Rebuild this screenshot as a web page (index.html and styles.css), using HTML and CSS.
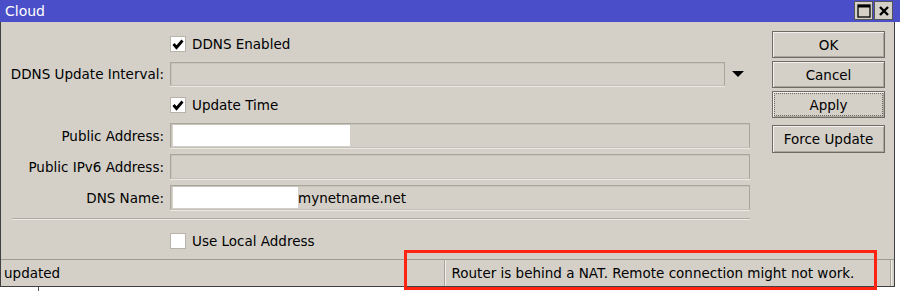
FILE: index.html
```html
<!DOCTYPE html>
<html>
<head>
<meta charset="utf-8">
<link rel="stylesheet" href="styles.css">
</head>
<body>
<div class="screen">
  <div class="titlebar">
    <span class="title">Cloud</span>
    <div class="tbtns">
      <span class="tbtn"><svg width="14" height="14" viewBox="0 0 14 14"><rect x="1" y="1" width="12" height="12" fill="none" stroke="#000" stroke-width="1.3"/><rect x="1" y="1" width="12" height="2.5" fill="#000"/></svg></span>
      <span class="tbtn"><svg width="12" height="12" viewBox="0 0 12 12"><path d="M2 2 L10 10 M10 2 L2 10" stroke="#000" stroke-width="2.4"/></svg></span>
    </div>
  </div>
  <div class="window">
    <div class="main">
      <div class="form">
        <div class="row">
          <div class="label"></div>
          <label class="check"><span class="box"><svg width="12" height="12" viewBox="0 0 12 12"><path d="M1.5 6 L4.5 9.5 L10.5 2.5" fill="none" stroke="#000" stroke-width="2.8"/></svg></span>DDNS Enabled</label>
        </div>
        <div class="row r24">
          <div class="label">DDNS Update Interval:</div>
          <div class="field drop"></div>
          <span class="arrow"></span>
        </div>
        <div class="row">
          <div class="label"></div>
          <label class="check"><span class="box"><svg width="12" height="12" viewBox="0 0 12 12"><path d="M1.5 6 L4.5 9.5 L10.5 2.5" fill="none" stroke="#000" stroke-width="2.8"/></svg></span>Update Time</label>
        </div>
        <div class="row">
          <div class="label">Public Address:</div>
          <div class="field"><span class="redact w177"></span></div>
        </div>
        <div class="row">
          <div class="label">Public IPv6 Address:</div>
          <div class="field"></div>
        </div>
        <div class="row">
          <div class="label">DNS Name:</div>
          <div class="field"><span class="redact w125"></span><span class="val">mynetname.net</span></div>
        </div>
        <div class="sep"></div>
        <div class="row">
          <div class="label"></div>
          <label class="check"><span class="box"></span>Use Local Address</label>
        </div>
      </div>
      <div class="buttons">
        <div class="btn">OK</div>
        <div class="btn">Cancel</div>
        <div class="btn focus"><span>Apply</span></div>
        <div class="btn force">Force Update</div>
      </div>
    </div>
    <div class="status">
      <div class="seg s1">updated</div>
      <div class="seg s2"></div>
      <div class="seg s3">Router is behind a NAT. Remote connection might not work.</div>
      <div class="seg s4"></div>
    </div>
  </div>
  <div class="below"><span class="vl"></span></div>
  <div class="highlight"></div>
</div>
</body>
</html>
```

FILE: styles.css
```css
html, body {
  margin: 0;
  padding: 0;
  background: #ffffff;
}
.screen {
  position: relative;
  width: 900px;
  height: 291px;
  overflow: hidden;
  font-family: "DejaVu Sans", Verdana, sans-serif;
  font-size: 13.5px;
  color: #000;
}
.titlebar {
  height: 22px;
  background: #4a4fc9;
  display: flex;
  align-items: center;
  justify-content: space-between;
  padding-left: 5px;
  padding-right: 7px;
  box-sizing: border-box;
}
.title {
  color: #fff;
  font-size: 14px;
  font-family: "DejaVu Sans", sans-serif;
}
.tbtns {
  display: flex;
  gap: 1px;
  align-self: flex-start;
  padding-top: 1px;
}
.tbtn {
  width: 19px;
  height: 19px;
  background: #d4d0c8;
  border: 1px solid #555;
  display: flex;
  align-items: center;
  justify-content: center;
  box-sizing: border-box;
}
.window {
  width: 895px;
  height: 265px;
  box-sizing: border-box;
  background: #d4d0c8;
  border-left: 1px solid #404040;
  border-right: 1px solid #404040;
  border-bottom: 1px solid #404040;
  display: flex;
  flex-direction: column;
}
.main {
  display: flex;
  flex: 1;
}
.form {
  width: 749px;
  padding-top: 9px;
  display: flex;
  flex-direction: column;
  gap: 6px;
}
.row {
  height: 25px;
  display: flex;
  align-items: center;
}
.row.r24 { height: 24px; }
.label {
  width: 163px;
  flex: none;
  text-align: right;
  padding-right: 6px;
  white-space: nowrap;
}
.field {
  flex: 1;
  align-self: stretch;
  box-sizing: border-box;
  border: 1px solid #a9a59d;
  border-bottom-color: #c4c0b8;
  box-shadow: inset 1px 1px 0 #c8c4bc, 0 1px 0 #ebe9e4;
  display: flex;
  align-items: stretch;
  padding: 1px 2px;
}
.field.drop {
  flex: none;
  width: 555px;
}
.arrow {
  width: 0;
  height: 0;
  margin-left: 7px;
  border-left: 6px solid transparent;
  border-right: 6px solid transparent;
  border-top: 6px solid #000;
}
.redact {
  background: #fff;
  display: block;
}
.w177 { width: 177px; }
.w125 { width: 125px; }
.val {
  display: flex;
  align-items: center;
}
.check {
  display: flex;
  align-items: center;
  gap: 6px;
}
.box {
  width: 16px;
  height: 16px;
  box-sizing: border-box;
  background: #fff;
  border: 1px solid #b8b4ac;
  display: flex;
  align-items: center;
  justify-content: center;
}
.sep {
  height: 1px;
  margin-left: 11px;
  margin-top: 2px;
  margin-bottom: 3px;
  background: #aeaaa2;
  box-shadow: 0 1px 0 #ecebe6;
}
.buttons {
  margin-left: 22px;
  padding-top: 9px;
  width: 113px;
  display: flex;
  flex-direction: column;
  gap: 3px;
}
.btn {
  height: 27px;
  box-sizing: border-box;
  border: 1px solid #6f6c66;
  box-shadow: inset 1px 1px 0 #f2f1ee, inset -1px -1px 0 #aaa69e;
  display: flex;
  align-items: center;
  justify-content: center;
}
.btn.focus span {
  display: flex;
  align-items: center;
  justify-content: center;
}
.btn.focus {
  outline: 1px dotted #6a6760;
  outline-offset: -3px;
}
.btn.force {
  margin-top: 4px;
  height: 28px;
}
.status {
  height: 27px;
  border-top: 1px solid #9e9a92;
  display: flex;
  box-sizing: border-box;
}
.seg {
  display: flex;
  align-items: center;
  padding-left: 3px;
  box-sizing: border-box;
  border-right: 1px solid #a8a49c;
  box-shadow: 1px 0 0 #efeee9;
  white-space: nowrap;
}
.s1 { width: 404px; }
.s2 { width: 40px; }
.s3 { width: 447px; padding-left: 7px; }
.s4 { flex: 1; border-right: none; box-shadow: none; }
.below {
  height: 4px;
  position: relative;
}
.vl {
  position: absolute;
  left: 38px;
  top: 0;
  width: 1px;
  height: 4px;
  background: #555;
}
.highlight {
  position: absolute;
  left: 404px;
  top: 250px;
  width: 473px;
  height: 40px;
  box-sizing: border-box;
  border: 3px solid #ff2412;
}
```
